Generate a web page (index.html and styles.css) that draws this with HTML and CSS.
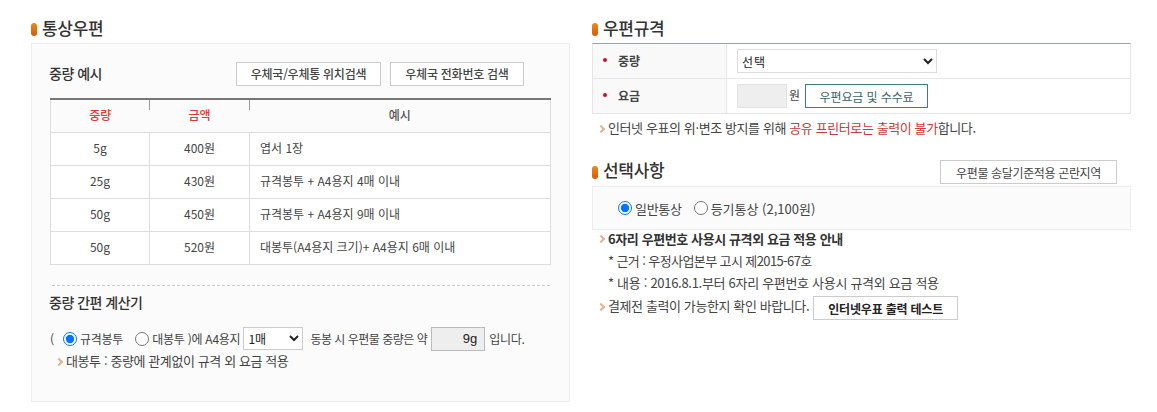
FILE: index.html
```html
<!DOCTYPE html>
<html lang="ko">
<head>
<meta charset="utf-8">
<title>통상우편</title>
<link rel="stylesheet" href="styles.css">
</head>
<body>
<div class="page">
  <section class="col">
    <h2 class="title"><span class="pill"></span>통상우편</h2>
    <div class="panel">
      <div class="panel-head">
        <h3 class="sub">중량 예시</h3>
        <div class="btns">
          <button class="btn w-loc">우체국/우체통 위치검색</button>
          <button class="btn w-tel">우체국 전화번호 검색</button>
        </div>
      </div>
      <table class="ex">
        <colgroup><col class="c1"><col class="c2"><col></colgroup>
        <thead>
          <tr><th class="red"><span class="tick"></span>중량</th><th class="red"><span class="tick"></span>금액</th><th>예시</th></tr>
        </thead>
        <tbody>
          <tr><td class="ctr">5g</td><td class="ctr">400원</td><td>엽서 1장</td></tr>
          <tr><td class="ctr">25g</td><td class="ctr">430원</td><td>규격봉투 + A4용지 4매 이내</td></tr>
          <tr><td class="ctr">50g</td><td class="ctr">450원</td><td>규격봉투 + A4용지 9매 이내</td></tr>
          <tr><td class="ctr">50g</td><td class="ctr">520원</td><td>대봉투(A4용지 크기)+ A4용지 6매 이내</td></tr>
        </tbody>
      </table>
      <div class="dash"></div>
      <h3 class="sub calc-title">중량 간편 계산기</h3>
      <div class="calc">
        <span class="paren">(</span>
        <label class="radio r1"><input type="radio" name="env" checked>규격봉투</label>
        <label class="radio r2"><input type="radio" name="env">대봉투 )에 A4용지</label>
        <select class="sel-count"><option>1매</option></select>
        <span class="tight">동봉 시 우편물 중량은 약</span>
        <input class="weight" type="text" value="9g" readonly>
        <span>입니다.</span>
      </div>
      <p class="note calc-note">대봉투 : 중량에 관계없이 규격 외 요금 적용</p>
    </div>
  </section>

  <section class="col">
    <h2 class="title"><span class="pill"></span>우편규격</h2>
    <div class="spec">
      <div class="spec-row">
        <div class="spec-k"><i class="star"></i>중량</div>
        <div class="spec-v"><select class="sel-w"><option>선택</option></select></div>
      </div>
      <div class="spec-row">
        <div class="spec-k"><i class="star"></i>요금</div>
        <div class="spec-v"><span class="fee"></span><span class="won">원</span><button class="btn-green">우편요금 및 수수료</button></div>
      </div>
    </div>
    <p class="note wide spec-note">인터넷 우표의 위·변조 방지를 위해 <em>공유 프린터로는 출력이 불가</em>합니다.</p>

    <div class="opt-head">
      <h2 class="title flat"><span class="pill"></span>선택사항</h2>
      <button class="btn w-area">우편물 송달기준적용 곤란지역</button>
    </div>
    <div class="opt">
      <label class="radio"><input type="radio" name="kind" checked>일반통상</label>
      <label class="radio loose"><input type="radio" name="kind">등기통상 (2,100원)</label>
    </div>
    <p class="note wide strong">6자리 우편번호 사용시 규격외 요금 적용 안내</p>
    <p class="plain plain-tight">* 근거 : 우정사업본부 고시 제2015-67호</p>
    <p class="plain">* 내용 : 2016.8.1.부터 6자리 우편번호 사용시 규격외 요금 적용</p>
    <div class="test-row">
      <p class="note wide test-note">결제전 출력이 가능한지 확인 바랍니다.</p>
      <button class="btn w-test">인터넷우표 출력 테스트</button>
    </div>
  </section>
</div>
</body>
</html>
```
FILE: styles.css
```css
* { box-sizing: border-box; }
html, body { margin: 0; padding: 0; background: #fff; }
body {
  font-family: "Noto Sans CJK KR", "Noto Sans", sans-serif;
  font-size: 12px;
  color: #444;
  overflow: hidden;
}
button, select, input { font-family: inherit; }
h2, h3, p { margin: 0; }
.page {
  display: flex;
  gap: 22px;
  padding: 15px 26px 0 31px;
}
.col { width: 539px; flex: none; }
.title {
  display: flex;
  align-items: center;
  height: 28px;
  padding-bottom: 4px;
  font-size: 17px;
  font-weight: 500;
  color: #333;
  letter-spacing: -0.3px;
}
.pill {
  width: 6px;
  height: 13px;
  margin: 4px 5px 0 0;
  border-radius: 3px;
  background: linear-gradient(#e98a1c, #d95a05);
}
.flat { padding-bottom: 6px; }
.flat .pill { margin-top: 6px; }
.panel {
  height: 359px;
  border: 1px solid #eee;
  background: #fbfbfb;
  padding: 0 17px;
}
.panel-head {
  display: flex;
  justify-content: space-between;
  align-items: center;
  height: 54px;
  padding-top: 5px;
}
.sub { font-size: 14px; font-weight: 500; color: #333; letter-spacing: -0.5px; }
.panel-head .sub { margin-bottom: 1px; }
.btns { display: flex; gap: 9px; margin-right: 28px; }
.btn {
  height: 24px;
  padding: 0;
  border: 1px solid #ccc;
  background: #fff;
  color: #444;
  font-size: 12px;
  font-weight: 500;
  letter-spacing: -0.25px;
}
.w-loc { width: 145px; }
.w-tel { width: 134px; }
.w-area { width: 177px; margin-right: 14px; font-weight: 400; letter-spacing: -0.35px; }
.w-test { width: 145px; color: #222; font-weight: 700; letter-spacing: -0.2px; }
.ex {
  width: 501px;
  margin-left: 1px;
  border-collapse: collapse;
  table-layout: fixed;
  border-top: 2px solid #777;
  background: #fff;
}
.c1 { width: 99px; }
.c2 { width: 100px; }
.ex th, .ex td {
  border: 1px solid #ddd;
  height: 33px;
  padding: 0 10px 2px;
  font-size: 12px;
  font-weight: 400;
  color: #444;
}
.ex th {
  position: relative;
  font-weight: 500;
  color: #555;
  background: #fbfbfb;
  border-top: 0;
  border-left: 0;
  border-right: 0;
}
.ex th:first-child { border-left: 1px solid #ddd; }
.ex th:last-child { border-right: 1px solid #ddd; }
.ex th.red { color: #e5352f; }
.tick {
  position: absolute;
  top: 0;
  right: 0;
  width: 1px;
  height: 10px;
  background: #999;
}
.ctr { text-align: center; }
.dash {
  margin: 20px 2px 0 3px;
  border-top: 1px dashed #ccc;
}
.calc-title { margin-top: 6px; line-height: 20px; }
.calc {
  display: flex;
  align-items: center;
  height: 24px;
  margin-top: 15px;
  padding-left: 1px;
  white-space: nowrap;
  letter-spacing: -0.25px;
}
.tight { letter-spacing: -0.5px; }
.paren { width: 9px; }
.radio { display: inline-flex; align-items: center; }
.radio input { margin: 0 3px 0 0; width: 14px; height: 14px; }
.r1 { margin-left: 4px; }
.r2 { margin-left: 12px; }
.sel-count {
  width: 60px;
  height: 23px;
  margin: 0 7px 0 3px;
  padding: 0;
  border: 1px solid #ccc;
  background: #fff;
  color: #222;
  font-size: 12px;
}
.weight {
  width: 54px;
  height: 24px;
  margin: 0 4px 0 4px;
  padding: 0 7px;
  border: 1px solid #bbb;
  background: #eee;
  color: #222;
  text-align: right;
  font-size: 13px;
  font-family: "Liberation Sans", sans-serif;
}
.note {
  position: relative;
  padding-left: 11px;
  font-size: 13px;
  letter-spacing: -0.4px;
  line-height: 18px;
  color: #444;
}
.note::before {
  content: "";
  position: absolute;
  left: 1px;
  top: 7px;
  width: 4px;
  height: 4px;
  border-top: 2px solid #e0b592;
  border-right: 2px solid #e0b592;
  transform: rotate(45deg);
}
.wide { padding-left: 16px; }
.wide::before { left: 6px; }
.calc-note { margin: 1px 0 0 6px; }
.spec {
  border-top: 1px solid #9aa5a5;
  border-bottom: 1px solid #e6e6e6;
  border-left: 1px solid #e6e6e6;
  border-right: 1px solid #e6e6e6;
}
.spec-row { display: flex; height: 34px; }
.spec-row + .spec-row { border-top: 1px solid #e6e6e6; height: 35px; }
.spec-k {
  width: 134px;
  display: flex;
  align-items: center;
  padding: 0 0 2px 10px;
  background: #f9f9f9;
  border-right: 1px solid #e6e6e6;
  font-weight: 700;
  color: #444;
}
.star {
  width: 4px;
  height: 4px;
  margin-right: 11px;
  border-radius: 50%;
  background: #c3162e;
}
.spec-v { flex: 1; display: flex; align-items: center; padding-left: 10px; }
.sel-w {
  width: 200px;
  height: 24px;
  padding: 0;
  border: 1px solid #ddd;
  background: #fff;
  color: #222;
  font-size: 12px;
  letter-spacing: 1px;
}
.fee { width: 50px; height: 24px; border: 1px solid #e2e2e2; background: #eee; }
.won { margin: 0 5px 3px 2px; }
.btn-green {
  width: 123px;
  height: 24px;
  padding: 0;
  border: 1px solid #3c7f7c;
  background: #fff;
  color: #3c6664;
  font-size: 12px;
  letter-spacing: -0.1px;
}
.spec-note { margin-top: 5px; }
.spec-note em { font-style: normal; color: #cc3a33; }
.opt-head {
  display: flex;
  justify-content: space-between;
  align-items: center;
  height: 28px;
  margin-top: 21px;
}
.opt {
  display: flex;
  align-items: center;
  gap: 12px;
  height: 44px;
  padding-left: 25px;
  border: 1px solid #eee;
  background: #fbfbfb;
  font-size: 13px;
  letter-spacing: -0.3px;
}
.loose { letter-spacing: 0; }
.strong { margin-top: -1px; margin-bottom: 1px; font-weight: 700; color: #333; line-height: 20px; }
.plain {
  padding-left: 16px;
  font-size: 13px;
  letter-spacing: -0.3px;
  line-height: 22px;
}
.plain-tight { letter-spacing: -0.6px; }
.test-row { display: flex; align-items: center; gap: 4px; margin-top: 2px; }
.test-note { margin-bottom: 4px; }
```
